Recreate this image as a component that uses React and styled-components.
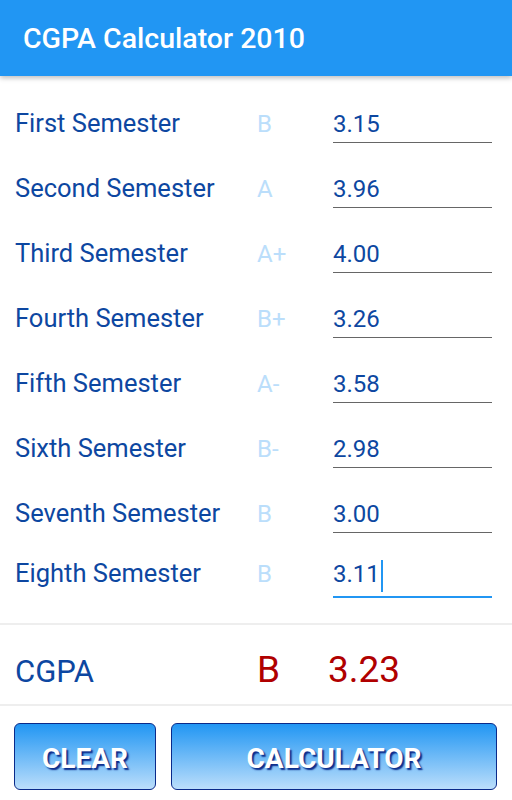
import React from 'react';
import styled, { createGlobalStyle } from 'styled-components';

const GlobalStyle = createGlobalStyle`
  html, body {
    margin: 0;
    padding: 0;
    background: #ffffff;
  }
  body {
    font-family: Roboto, 'Noto Sans', sans-serif;
  }
`;

const Screen = styled.div`
  width: 512px;
  height: 800px;
  display: flex;
  flex-direction: column;
  background: #ffffff;
  overflow: hidden;
`;

const AppBar = styled.header`
  height: 76px;
  flex-shrink: 0;
  background: #2196f3;
  display: flex;
  align-items: center;
  padding-left: 23px;
  box-shadow: 0 2px 5px rgba(0, 0, 0, 0.26);
  position: relative;
  z-index: 1;
`;

const Title = styled.h1`
  margin: 0;
  font-size: 28.5px;
  font-weight: 500;
  color: #ffffff;
`;

const List = styled.div`
  display: flex;
  flex-direction: column;
  padding: 10px 20px 0 15px;
`;

const Row = styled.div`
  height: 65px;
  box-sizing: border-box;
  padding-bottom: 8px;
  display: grid;
  grid-template-columns: 242px 76px 1fr;
  align-items: baseline;
  align-content: end;
`;

const Label = styled.span`
  font-size: 25.5px;
  line-height: 28px;
  color: #0d47a1;
`;

const Grade = styled.span`
  font-size: 24px;
  line-height: 28px;
  color: #bbdefb;
`;

const Field = styled.div`
  display: flex;
  align-items: baseline;
  font-size: 24px;
  line-height: 28px;
  color: #0d47a1;
  padding-bottom: ${p => (p.$focused ? '4px' : '4.5px')};
  border-bottom: ${p => (p.$focused ? '2px solid #2196f3' : '1.5px solid #666666')};
`;

const Caret = styled.span`
  display: inline-block;
  align-self: center;
  width: 2px;
  height: 32px;
  margin-left: 1px;
  background: #2196f3;
`;

const Divider = styled.div`
  height: 2px;
  background: #eeeeee;
  margin-top: ${p => p.$offset || 0}px;
`;

const ResultRow = styled.div`
  height: 79px;
  box-sizing: border-box;
  padding: 0 0 14px 15px;
  display: grid;
  grid-template-columns: 242px 71px 1fr;
  align-items: baseline;
  align-content: end;
`;

const ResultLabel = styled.span`
  font-size: 31px;
  line-height: 36px;
  color: #0d47a1;
`;

const ResultValue = styled.span`
  font-size: 37px;
  line-height: 36px;
  color: #b00000;
`;

const Buttons = styled.div`
  display: flex;
  gap: 15px;
  padding: 17px 15px 0 14px;
`;

const Button = styled.button`
  width: ${p => p.$width}px;
  height: 67px;
  box-sizing: border-box;
  border: 1.5px solid #0a2a8a;
  border-radius: 6px;
  background: linear-gradient(to bottom, #2196f3 0%, #bbdefb 100%);
  font-family: Roboto, 'Noto Sans', sans-serif;
  font-size: 28px;
  font-weight: 700;
  color: #ffffff;
  text-shadow: 2px 2px 1.5px #0a2a8a;
  padding: 4px 0 0;
  cursor: pointer;
`;

const semesters = [
  ['First Semester', 'B', '3.15'],
  ['Second Semester', 'A', '3.96'],
  ['Third Semester', 'A+', '4.00'],
  ['Fourth Semester', 'B+', '3.26'],
  ['Fifth Semester', 'A-', '3.58'],
  ['Sixth Semester', 'B-', '2.98'],
  ['Seventh Semester', 'B', '3.00'],
  ['Eighth Semester', 'B', '3.11'],
];

export default function App() {
  return (
    <Screen>
      <GlobalStyle />
      <AppBar>
        <Title>CGPA Calculator 2010</Title>
      </AppBar>
      <List>
        {semesters.map(([name, grade, gpa], i) => {
          const focused = i === semesters.length - 1;
          return (
            <Row key={name}>
              <Label>{name}</Label>
              <Grade>{grade}</Grade>
              <Field $focused={focused}>
                {gpa}
                {focused && <Caret />}
              </Field>
            </Row>
          );
        })}
      </List>
      <Divider $offset={17} />
      <ResultRow>
        <ResultLabel>CGPA</ResultLabel>
        <ResultValue>B</ResultValue>
        <ResultValue>3.23</ResultValue>
      </ResultRow>
      <Divider />
      <Buttons>
        <Button $width={142}>CLEAR</Button>
        <Button $width={326}>CALCULATOR</Button>
      </Buttons>
    </Screen>
  );
}
